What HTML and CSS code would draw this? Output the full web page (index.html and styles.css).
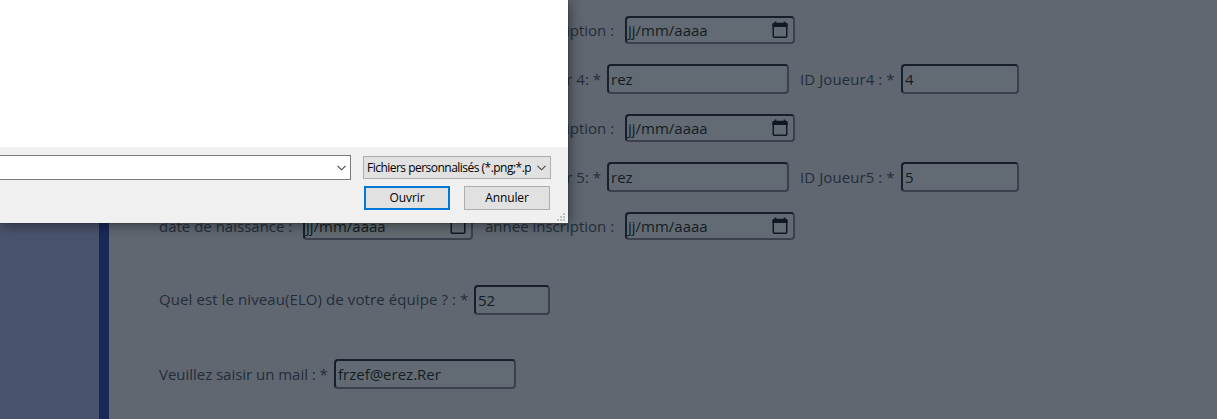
FILE: index.html
```
<!DOCTYPE html>
<html lang="fr">
<head>
<meta charset="utf-8">
<title>Inscription</title>
<link rel="stylesheet" href="styles.css">
</head>
<body>
<svg class="defs" aria-hidden="true">
  <symbol id="calendar" viewBox="0 0 16 18">
    <path d="M1.25 3v12.25q0 1 1 1h11.5q1 0 1-1V3" fill="none" stroke="#101923" stroke-width="1.5"/>
    <path d="M.5 3q0-1.3 1.3-1.3h12.4q1.3 0 1.3 1.3v3H.5zM2.7.4h1.6v2H2.7zM11.7.4h1.6v2h-1.6z" fill="#101923"/>
  </symbol>
</svg>
<main class="page">
  <div class="sidebar"></div>
  <form class="form">
    <div class="row date-row"><span class="label year">année inscription :</span><span class="field date"><span class="value">jj/mm/aaaa</span><svg class="cal"><use href="#calendar"/></svg></span></div>
    <div class="row"><span class="label player">r 4: *</span><span class="field wide"><span class="value">rez</span></span><span class="label ident">ID Joueur4 : *</span><span class="field id"><span class="value">4</span></span></div>
    <div class="row date-row"><span class="label year">année inscription :</span><span class="field date"><span class="value">jj/mm/aaaa</span><svg class="cal"><use href="#calendar"/></svg></span></div>
    <div class="row"><span class="label player">r 5: *</span><span class="field wide"><span class="value">rez</span></span><span class="label ident">ID Joueur5 : *</span><span class="field id"><span class="value">5</span></span></div>
    <div class="row date-row last"><span class="label birth">date de naissance :</span><span class="field date"><span class="value">jj/mm/aaaa</span><svg class="cal"><use href="#calendar"/></svg></span><span class="label year">année inscription :</span><span class="field date"><span class="value">jj/mm/aaaa</span><svg class="cal"><use href="#calendar"/></svg></span></div>
    <div class="row level"><span class="label elo">Quel est le niveau(ELO) de votre équipe ? : *</span><span class="field small"><span class="value">52</span></span></div>
    <div class="row"><span class="label mail">Veuillez saisir un mail : *</span><span class="field wide"><span class="value email">frzef@erez.Rer</span></span></div>
  </form>
</main>
<div class="dialog">
  <div class="files"></div>
  <div class="controls">
    <div class="line">
      <div class="filename"><svg class="chev" viewBox="0 0 9 6"><path d="M.5.8l4 4 4-4"/></svg></div>
      <div class="filter"><span class="filter-text">Fichiers personnalisés (*.png;*.p</span><svg class="chev" viewBox="0 0 9 6"><path d="M.5.8l4 4 4-4"/></svg></div>
    </div>
    <div class="line buttons"><div class="button primary">Ouvrir</div><div class="button">Annuler</div></div>
  </div>
  <svg class="grip" viewBox="0 0 8 8"><path d="M6 0h2v2H6zM3 3h2v2H3zM6 3h2v2H6zM0 6h2v2H0zM3 6h2v2H3zM6 6h2v2H6z" fill="#bfbfbf"/></svg>
</div>
</body>
</html>
```
FILE: styles.css
```
* { box-sizing: border-box; }
body { margin: 0; height: 419px; overflow: hidden; position: relative; background: #606771; font-family: "Open Sans", "Noto Sans", sans-serif; font-size: 15px; color: #232d39; }
.defs { position: absolute; width: 0; height: 0; }
.page { display: flex; height: 419px; }
.sidebar { flex: none; width: 109px; background: #4a536d; border-right: 10px solid #1a2a57; }
.form { flex: none; width: 1108px; padding: 15px 0 0 50px; }
.row { display: flex; align-items: center; height: 30px; margin-bottom: 19px; }
.label { flex: none; white-space: nowrap; line-height: 22px; }
.year { width: 140px; margin-left: 326px; }
.last .year { margin-left: 12px; }
.birth { width: 144px; }
.player { width: 448px; padding-right: 6px; text-align: right; }
.ident { width: 112px; padding-left: 11px; letter-spacing: .08px; }
.elo { width: 315px; letter-spacing: .09px; padding-bottom: 2px; }
.mail { width: 175px; letter-spacing: -.03px; }
.level { margin: 44px 0 44px; }
.field { flex: none; display: flex; align-items: center; justify-content: space-between; height: 30px; border: 2px solid #3a414d; border-top-color: #171f2c; border-left-color: #171f2c; border-radius: 4px; background: #626b73; color: #141c23; padding-left: 2px; }
.value { letter-spacing: 0; }
.date { width: 170px; height: 28px; padding: 0 5px 0 1px; }
.wide { width: 182px; }
.id { width: 118px; }
.small { width: 76px; }
.cal { width: 16px; height: 18px; margin-top: -1px; }
.dialog { position: absolute; left: 0; top: 0; width: 568px; height: 223px; background: #f0f0f0; box-shadow: 0 0 1px #222, 2px 2px 12px rgba(0,0,0,.45); color: #000; font-size: 12px; }
.files { height: 147px; background: #fff; }
.controls { padding-top: 8px; }
.line { display: flex; }
.filename { width: 351px; height: 25px; border: 1px solid #7a7a7a; border-left: 0; background: #fff; display: flex; align-items: center; justify-content: flex-end; padding-right: 4px; }
.filter { width: 188px; height: 23px; margin: 1px 0 0 12px; border: 1px solid #adadad; background: #e1e1e1; display: flex; align-items: center; padding: 0 4px 0 3px; justify-content: space-between; }
.filter-text { width: 164px; overflow: hidden; white-space: nowrap; letter-spacing: -.52px; }
.chev { width: 9px; height: 6px; flex: none; fill: none; stroke: #444; stroke-width: 1.1; }
.buttons { padding: 6px 0 0 364px; gap: 14px; }
.button { width: 86px; height: 24px; border: 1px solid #adadad; background: #e1e1e1; text-align: center; line-height: 22px; letter-spacing: -.1px; }
.primary { border: 2px solid #0078d7; line-height: 20px; }
.grip { position: absolute; right: 3px; bottom: 2px; width: 8px; height: 8px; }
```
